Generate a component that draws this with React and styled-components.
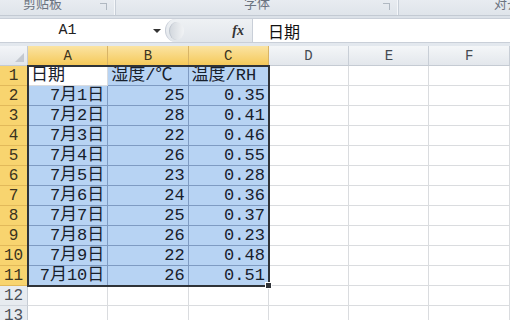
import React from 'react';
import styled, { createGlobalStyle } from 'styled-components';

const GlobalStyle = createGlobalStyle`
  html, body {
    margin: 0;
    padding: 0;
    width: 510px;
    height: 320px;
    overflow: hidden;
    background: #ffffff;
  }
`;

const CJK = `"Liberation Mono", "Noto Sans CJK SC", monospace`;

const rows = [
  ['日期', '湿度/℃', '温度/RH'],
  ['7月1日', '25', '0.35'],
  ['7月2日', '28', '0.41'],
  ['7月3日', '22', '0.46'],
  ['7月4日', '26', '0.55'],
  ['7月5日', '23', '0.28'],
  ['7月6日', '24', '0.36'],
  ['7月7日', '25', '0.37'],
  ['7月8日', '26', '0.23'],
  ['7月9日', '22', '0.48'],
  ['7月10日', '26', '0.51'],
  ['', '', ''],
  ['', '', ''],
];

const columns = ['A', 'B', 'C', 'D', 'E', 'F'];

const Page = styled.div`
  width: 510px;
  height: 320px;
  overflow: hidden;
  background: #e3e8ee;
  font-family: ${CJK};
`;

const Ribbon = styled.div`
  height: 15px;
  display: flex;
  overflow: hidden;
  background: linear-gradient(#e8ecf1, #dfe4ea);
  border-bottom: 1px solid #c3cad3;
`;

const Group = styled.div`
  position: relative;
  width: ${(p) => p.$w}px;
  flex-shrink: 0;
  display: flex;
  justify-content: ${(p) => (p.$start ? 'flex-start' : 'center')};
  padding-left: ${(p) => p.$pl || 0}px;
  padding-right: ${(p) => p.$pr || 0}px;
  box-sizing: border-box;
  border-right: 1px solid #c8cfd8;
  box-shadow: inset -1px 0 0 #f5f7fa;
`;

const GroupLabel = styled.span`
  margin-top: -7px;
  font-family: "Noto Sans CJK SC", sans-serif;
  font-size: 13px;
  line-height: 20px;
  white-space: nowrap;
  color: #6b7380;
`;

const Launcher = styled.span`
  position: absolute;
  right: 8px;
  top: 3px;
  width: 6px;
  height: 6px;
  border-right: 1px solid #9aa3ae;
  border-top: 1px solid #9aa3ae;
  opacity: 0.7;
`;

const Strip = styled.div`
  height: 2px;
  background: #dbe1e8;
`;

const FormulaBar = styled.div`
  height: 23px;
  display: flex;
  background: #ffffff;
  border-top: 1px solid #c9cfd8;
  border-bottom: 1px solid #c9cfd8;
`;

const NameBox = styled.div`
  width: 165px;
  display: flex;
  align-items: center;
  position: relative;
  font-size: 15px;
  color: #222;
`;

const NameText = styled.span`
  flex: 1;
  text-align: center;
  padding-right: 30px;
`;

const Caret = styled.span`
  position: absolute;
  right: 4px;
  top: 10px;
  border-left: 4px solid transparent;
  border-right: 4px solid transparent;
  border-top: 4px solid #333;
`;

const FxArea = styled.div`
  width: 88px;
  display: flex;
  align-items: center;
  justify-content: space-between;
  background: linear-gradient(#eef1f4, #e2e6eb);
  border-left: 1px solid #c9cfd8;
  border-right: 1px solid #c9cfd8;
  border-radius: 11px 0 0 11px;
  padding: 0 8px 0 3px;
  box-sizing: border-box;
`;

const Knob = styled.span`
  width: 14px;
  height: 18px;
  border-radius: 50%;
  background: linear-gradient(90deg, #d3d8de, #f1f3f5);
  border-left: 1px solid #bcc3cc;
`;

const Fx = styled.span`
  font-family: "Liberation Serif", serif;
  font-style: italic;
  font-weight: bold;
  font-size: 14px;
  color: #333;
`;

const Input = styled.div`
  flex: 1;
  display: flex;
  align-items: center;
  padding-left: 15px;
  font-family: "Noto Sans CJK SC", sans-serif;
  font-size: 16px;
  color: #111;
`;

const Gap = styled.div`
  height: 3px;
  background: #e3e8ee;
`;

const Sheet = styled.div`
  position: relative;
  display: grid;
  grid-template-columns: 28px repeat(6, 80.3px);
  grid-auto-rows: 20px;
  background: #ffffff;
`;

const Corner = styled.div`
  position: relative;
  background: linear-gradient(#f3f5f8, #e2e6eb);
  border-right: 1px solid #c5cbd3;
  border-bottom: 1px solid #c5cbd3;
  box-sizing: border-box;
  &::after {
    content: '';
    position: absolute;
    right: 3px;
    bottom: 3px;
    border-left: 9px solid transparent;
    border-bottom: 9px solid #c4c9d0;
  }
`;

const ColHead = styled.div`
  display: flex;
  align-items: center;
  justify-content: center;
  box-sizing: border-box;
  font-family: "Liberation Mono", monospace;
  font-size: 14px;
  color: ${(p) => (p.$on ? '#3b3320' : '#444a52')};
  background: ${(p) =>
    p.$on ? 'linear-gradient(#fbe4a3, #f5c95a)' : 'linear-gradient(#f4f6f8, #e3e7ec)'};
  border-right: 1px solid ${(p) => (p.$on ? '#d8b466' : '#c8ced6')};
  border-bottom: 1px solid ${(p) => (p.$on ? '#c69a3a' : '#c5cbd3')};
`;

const RowHead = styled.div`
  display: flex;
  align-items: center;
  justify-content: center;
  box-sizing: border-box;
  font-family: "Liberation Mono", monospace;
  font-size: 16px;
  color: ${(p) => (p.$on ? '#3b3320' : '#4b5058')};
  background: ${(p) => (p.$on ? '#f8d46f' : '#e7ebf0')};
  border-right: 1px solid ${(p) => (p.$on ? '#c69a3a' : '#c5cbd3')};
  border-bottom: 1px solid ${(p) => (p.$on ? '#e2b95a' : '#d2d7de')};
`;

const Cell = styled.div`
  box-sizing: border-box;
  padding: 0 3px;
  font-size: 17px;
  line-height: 20px;
  white-space: nowrap;
  overflow: hidden;
  color: #17202c;
  text-align: ${(p) => (p.$right ? 'right' : 'left')};
  background: ${(p) => (p.$sel ? '#b7d3f3' : '#ffffff')};
  border-right: 1px solid ${(p) => (p.$sel ? '#7f9bc2' : '#dadcdf')};
  border-bottom: 1px solid ${(p) => (p.$sel ? '#7f9bc2' : '#dadcdf')};
`;

const Selection = styled.div`
  position: absolute;
  left: 27px;
  top: 19px;
  width: 243px;
  height: 222px;
  border: 2px solid #2f3338;
  box-sizing: border-box;
  pointer-events: none;
  &::after {
    content: '';
    position: absolute;
    right: -4px;
    bottom: -4px;
    width: 5px;
    height: 5px;
    background: #2f3338;
    border: 1px solid #ffffff;
  }
`;

export default function App() {
  return (
    <Page>
      <GlobalStyle />
      <Ribbon>
        <Group $w={116} $pr={30}>
          <GroupLabel>剪贴板</GroupLabel>
          <Launcher />
        </Group>
        <Group $w={283}>
          <GroupLabel>字体</GroupLabel>
          <Launcher />
        </Group>
        <Group $w={140} $start $pl={95}>
          <GroupLabel>对齐方式</GroupLabel>
        </Group>
      </Ribbon>
      <Strip />
      <FormulaBar>
        <NameBox>
          <NameText>A1</NameText>
          <Caret />
        </NameBox>
        <FxArea>
          <Knob />
          <Fx>fx</Fx>
        </FxArea>
        <Input>日期</Input>
      </FormulaBar>
      <Gap />
      <Sheet>
        <Corner />
        {columns.map((c, i) => (
          <ColHead key={c} $on={i < 3}>
            {c}
          </ColHead>
        ))}
        {rows.map((r, ri) => {
          const active = ri < 11;
          return (
            <React.Fragment key={ri}>
              <RowHead $on={active}>{ri + 1}</RowHead>
              {columns.map((c, ci) => {
                const val = ci < 3 ? r[ci] : '';
                const sel = active && ci < 3 && !(ri === 0 && ci === 0);
                return (
                  <Cell key={c} $sel={sel} $right={ri > 0}>
                    {val}
                  </Cell>
                );
              })}
            </React.Fragment>
          );
        })}
        <Selection />
      </Sheet>
    </Page>
  );
}
